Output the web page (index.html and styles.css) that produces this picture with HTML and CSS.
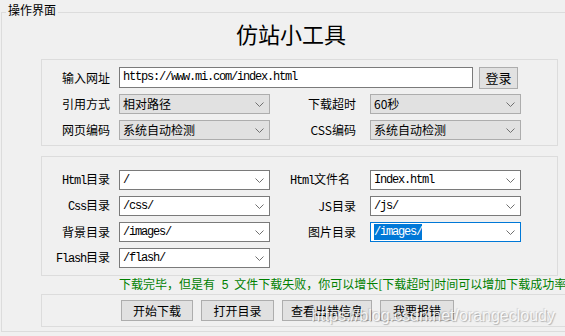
FILE: index.html
```html
<!DOCTYPE html>
<html lang="zh-CN">
<head>
  <meta charset="UTF-8" />
  <title>仿站小工具</title>
  <link rel="stylesheet" href="styles.css">
</head>
<body>
  <div class="group">
    <div class="group-title">操作界面</div>
    <div class="title">仿站小工具</div>

    <div class="panel panel-top">
      <div class="row">
        <div class="label">输入网址</div>
        <div class="textbox mono">https://www.mi.com/index.html</div>
        <button class="btn btn-login">登录</button>
      </div>
      <div class="row">
        <div class="label">引用方式</div>
        <div class="combo locked"><span>相对路径</span><svg width="9" height="5"><polyline points="0.5,0.5 4.5,4.5 8.5,0.5" /></svg></div>
        <div class="label label2">下载超时</div>
        <div class="combo locked"><span>60秒</span><svg width="9" height="5"><polyline points="0.5,0.5 4.5,4.5 8.5,0.5" /></svg></div>
      </div>
      <div class="row">
        <div class="label">网页编码</div>
        <div class="combo locked"><span>系统自动检测</span><svg width="9" height="5"><polyline points="0.5,0.5 4.5,4.5 8.5,0.5" /></svg></div>
        <div class="label label2">CSS编码</div>
        <div class="combo locked"><span>系统自动检测</span><svg width="9" height="5"><polyline points="0.5,0.5 4.5,4.5 8.5,0.5" /></svg></div>
      </div>
    </div>

    <div class="panel panel-dirs">
      <div class="row">
        <div class="label"><span class="en">Html</span>目录</div>
        <div class="combo"><span class="mono">/</span><svg width="9" height="5"><polyline points="0.5,0.5 4.5,4.5 8.5,0.5" /></svg></div>
        <div class="label label2 label-file"><span class="en">Html</span>文件名</div>
        <div class="combo"><span class="mono">Index.html</span><svg width="9" height="5"><polyline points="0.5,0.5 4.5,4.5 8.5,0.5" /></svg></div>
      </div>
      <div class="row">
        <div class="label"><span class="en">Css</span>目录</div>
        <div class="combo"><span class="mono">/css/</span><svg width="9" height="5"><polyline points="0.5,0.5 4.5,4.5 8.5,0.5" /></svg></div>
        <div class="label label2">JS目录</div>
        <div class="combo"><span class="mono">/js/</span><svg width="9" height="5"><polyline points="0.5,0.5 4.5,4.5 8.5,0.5" /></svg></div>
      </div>
      <div class="row">
        <div class="label">背景目录</div>
        <div class="combo"><span class="mono">/images/</span><svg width="9" height="5"><polyline points="0.5,0.5 4.5,4.5 8.5,0.5" /></svg></div>
        <div class="label label2">图片目录</div>
        <div class="combo focused"><span class="mono selected">/images/</span><svg width="9" height="5"><polyline points="0.5,0.5 4.5,4.5 8.5,0.5" /></svg></div>
      </div>
      <div class="row">
        <div class="label"><span class="en">Flash</span>目录</div>
        <div class="combo"><span class="mono">/flash/</span><svg width="9" height="5"><polyline points="0.5,0.5 4.5,4.5 8.5,0.5" /></svg></div>
      </div>
    </div>

    <div class="status">下载完毕，但是有<span class="num"> 5 </span>文件下载失败，你可以增长[下载超时]时间可以增加下载成功率</div>

    <div class="panel panel-actions">
      <button class="btn btn-start">开始下载</button>
      <button class="btn btn-open">打开目录</button>
      <button class="btn btn-errors">查看出错信息</button>
      <button class="btn btn-report">我要报错</button>
    </div>
  </div>

  <div class="watermark">https://blog.csdn.net/orangecloudy</div>
</body>
</html>
```

FILE: styles.css
```css
html, body {
  margin: 0;
  padding: 0;
  height: 100%;
  background: #f0f0f0;
  font-family: "Noto Sans CJK SC", sans-serif;
  font-size: 12px;
  color: #000;
  overflow: hidden;
}

.group {
  position: relative;
  margin: 12px 0 0 1px;
  width: 600px;
  height: 318px;
  border: 1px solid #dcdcdc;
}

.group-title {
  position: absolute;
  top: -11px;
  left: 4px;
  padding: 0 2px;
  line-height: 16px;
  background: #f0f0f0;
}

.title {
  width: 578px;
  padding-top: 7px;
  text-align: center;
  font-size: 22px;
  line-height: 26px;
}

.panel {
  margin-left: 39px;
  width: 515px;
  border: 1px solid #dcdcdc;
}

.panel-top {
  margin-top: 13px;
  padding: 7px 0 5px;
  display: flex;
  flex-direction: column;
  gap: 6px;
}

.panel-dirs {
  margin-top: 10px;
  padding: 13px 0 7px;
  display: flex;
  flex-direction: column;
  gap: 6px;
}

.row {
  display: flex;
  align-items: center;
  height: 20px;
}

.panel-top .row:first-child {
  height: 21px;
}

.label {
  width: 68px;
  margin-right: 9px;
  text-align: right;
  line-height: 16px;
  white-space: nowrap;
}

.label2 {
  width: 86px;
  margin-right: 14px;
}

.label-file {
  padding-right: 6px;
  width: 80px;
}

.en,
.mono {
  font-family: "Liberation Mono", monospace;
  letter-spacing: -1.2px;
}

.textbox {
  box-sizing: border-box;
  width: 354px;
  height: 21px;
  padding: 0 3px;
  background: #fff;
  border: 1px solid #7a7a7a;
  line-height: 19px;
  white-space: nowrap;
}

.combo {
  box-sizing: border-box;
  width: 151px;
  height: 20px;
  padding: 0 5px 0 3px;
  display: flex;
  align-items: center;
  justify-content: space-between;
  background: #fff;
  border: 1px solid #7a7a7a;
  line-height: 16px;
  white-space: nowrap;
}

.combo.locked {
  background: #e1e1e1;
  border-color: #adadad;
}

.combo.focused {
  border-color: #0078d7;
}

.combo svg polyline {
  fill: none;
  stroke: #707070;
  stroke-width: 1;
}

.selected {
  background: #0078d7;
  color: #fff;
}

.btn {
  box-sizing: border-box;
  height: 21px;
  padding: 0;
  background: #e1e1e1;
  border: 1px solid #adadad;
  font-family: "Noto Sans CJK SC", sans-serif;
  font-size: 12px;
  color: #000;
}

.btn-login {
  width: 39px;
  height: 22px;
  margin-left: 6px;
  font-size: 13px;
}

.status {
  padding-left: 117px;
  line-height: 15px;
  color: #008000;
  white-space: nowrap;
}

.status .num {
  font-family: "Liberation Mono", monospace;
  letter-spacing: -0.8px;
  white-space: pre;
}

.panel-actions {
  padding: 5px 0 5px 79px;
  display: flex;
  gap: 8px;
}

.btn-start { width: 72px; }
.btn-open { width: 73px; }
.btn-errors { width: 90px; }
.btn-report { width: 74px; }

.watermark {
  position: absolute;
  top: 307px;
  right: 10px;
  font-family: "Liberation Sans", sans-serif;
  font-size: 16px;
  color: rgba(255, 255, 255, 0.85);
  text-shadow: 1px 1px 1px rgba(0, 0, 0, 0.25), -1px -1px 1px rgba(0, 0, 0, 0.12);
  white-space: nowrap;
}
```
